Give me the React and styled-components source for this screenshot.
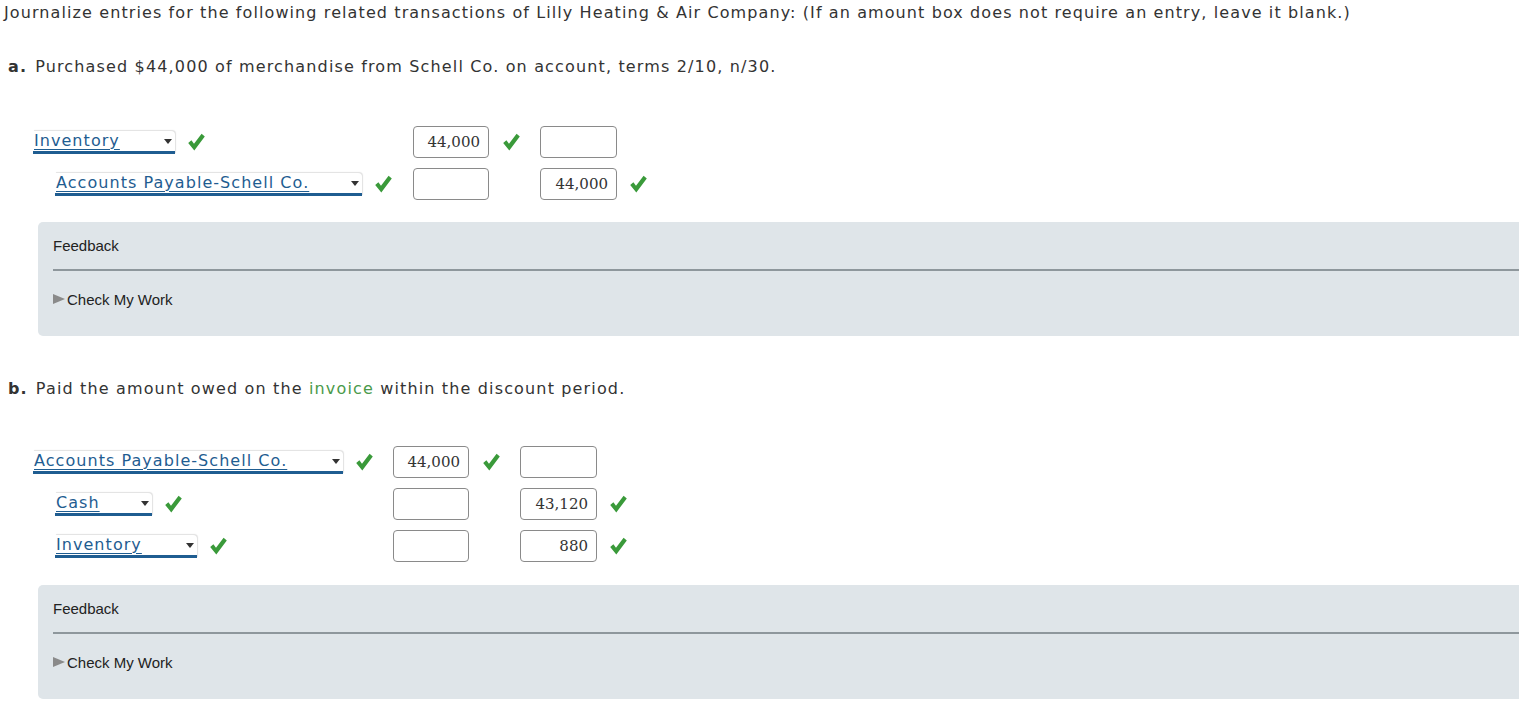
import React from 'react';
import styled, { createGlobalStyle } from 'styled-components';

const GlobalStyle = createGlobalStyle`
  body {
    margin: 0;
    background: #fff;
    font-family: Verdana, "DejaVu Sans", sans-serif;
    color: #333;
  }
`;

const Page = styled.div`
  padding: 3px 0 0 4px;
`;

const Intro = styled.p`
  margin: 0;
  font-size: 16px;
  line-height: 20px;
  letter-spacing: 1.1px;
  color: #333;
`;

const Part = styled.div`
  margin-top: ${p => p.top}px;
  padding-left: 4px;
`;

const Question = styled.p`
  margin: 0;
  font-size: 16px;
  line-height: 20px;
  letter-spacing: 1.15px;
  color: #333;
`;

const Letter = styled.b`
  color: #333;
  margin-right: 8px;
`;

const Term = styled.span`
  color: #4a9a4a;
`;

const Entry = styled.div`
  display: grid;
  grid-template-columns: max-content 76px 51px 77px 31px;
  row-gap: 10px;
  margin: ${p => p.top}px 0 0 25px;
  align-items: center;
`;

const AccountCell = styled.div`
  display: flex;
  align-items: center;
  padding-left: ${p => (p.credit ? 22 : 0)}px;
  padding-right: ${p => p.pad}px;
`;

const Select = styled.div`
  position: relative;
  box-sizing: border-box;
  width: ${p => p.w}px;
  height: 23px;
  background: #fff;
  border-radius: 0 4px 0 0;
  border-bottom: 3px solid #1f5d91;
  box-shadow: 1px -1px 1px rgba(0, 0, 0, 0.12);
  color: #1f5d91;
  font-size: 16px;
  line-height: 20px;
  letter-spacing: 1.05px;
  padding-left: 1px;
  text-decoration: underline;
  text-decoration-thickness: 1px;
  text-underline-offset: 3px;
`;

const Arrow = styled.span`
  position: absolute;
  right: 3px;
  top: 8px;
  width: 0;
  height: 0;
  border-left: 4px solid transparent;
  border-right: 4px solid transparent;
  border-top: 5px solid #333;
`;

const Amount = styled.div`
  box-sizing: border-box;
  width: ${p => p.w}px;
  height: 32px;
  border: 1px solid #8a8a8a;
  border-radius: 4px;
  background: #fff;
  font-family: "DejaVu Serif", "Liberation Serif", serif;
  font-size: 15px;
  line-height: 30px;
  color: #333;
  text-align: right;
  padding-right: 8px;
`;

const CheckWrap = styled.span`
  display: inline-flex;
  width: 20px;
  height: 20px;
  margin-left: ${p => p.gap || 0}px;
`;

const Feedback = styled.div`
  margin: ${p => p.top}px 0 0 30px;
  background: #dfe5e9;
  border-radius: 5px 0 0 5px;
  padding: 16px 0 0 15px;
  height: 98px;
  font-family: Arial, "Liberation Sans", sans-serif;
  font-size: 15px;
  color: #222;
`;

const FeedbackTitle = styled.div`
  line-height: 16px;
  padding-bottom: 15px;
  border-bottom: 2px solid #8e979c;
`;

const CheckWork = styled.div`
  display: flex;
  align-items: center;
  margin-top: 21px;
  line-height: 16px;
`;

const Tri = styled.span`
  width: 0;
  height: 0;
  border-top: 5px solid transparent;
  border-bottom: 5px solid transparent;
  border-left: 12px solid #8a8a8a;
  margin-right: 2px;
  margin-top: -2px;
`;

const Check = ({ gap }) => (
  <CheckWrap gap={gap}>
    <svg width="20" height="20" viewBox="0 0 20 20">
      <path d="M2.2 11 L5.4 8.3 L8 11.8 L15.6 1.8 L18.8 4.4 L8.3 18.4 Z" fill="#3a9a3a" />
    </svg>
  </CheckWrap>
);

const Row = ({ account, w, credit, pad, debit, credVal, debitCheck, creditCheck }) => (
  <>
    <AccountCell credit={credit} pad={pad}>
      <Select w={w}>
        {account}
        <Arrow />
      </Select>
      <Check gap={11} />
    </AccountCell>
    <Amount w={76}>{debit}</Amount>
    {debitCheck ? <Check gap={12} /> : <span />}
    <Amount w={77}>{credVal}</Amount>
    {creditCheck ? <Check gap={11} /> : <span />}
  </>
);

const FeedbackBox = ({ top }) => (
  <Feedback top={top}>
    <FeedbackTitle>Feedback</FeedbackTitle>
    <CheckWork>
      <Tri />
      Check My Work
    </CheckWork>
  </Feedback>
);

export default function App() {
  return (
    <>
      <GlobalStyle />
      <Page>
        <Intro>
          Journalize entries for the following related transactions of Lilly Heating &amp; Air Company: (If an amount box does not require an entry, leave it blank.)
        </Intro>
        <Part top={34}>
          <Question>
            <Letter>a.</Letter>Purchased $44,000 of merchandise from Schell Co. on account, terms 2/10, n/30.
          </Question>
          <Entry top={49}>
            <Row account="Inventory" w={142} pad={20} debit="44,000" debitCheck />
            <Row account="Accounts Payable-Schell Co." w={307} credit pad={20} credVal="44,000" creditCheck />
          </Entry>
          <FeedbackBox top={22} />
        </Part>
        <Part top={43}>
          <Question>
            <Letter>b.</Letter>Paid the amount owed on the <Term>invoice</Term> within the discount period.
          </Question>
          <Entry top={47}>
            <Row account="Accounts Payable-Schell Co." w={310} pad={19} debit="44,000" debitCheck />
            <Row account="Cash" w={97} credit pad={19} credVal="43,120" creditCheck />
            <Row account="Inventory" w={142} credit pad={19} credVal="880" creditCheck />
          </Entry>
          <FeedbackBox top={23} />
        </Part>
      </Page>
    </>
  );
}
